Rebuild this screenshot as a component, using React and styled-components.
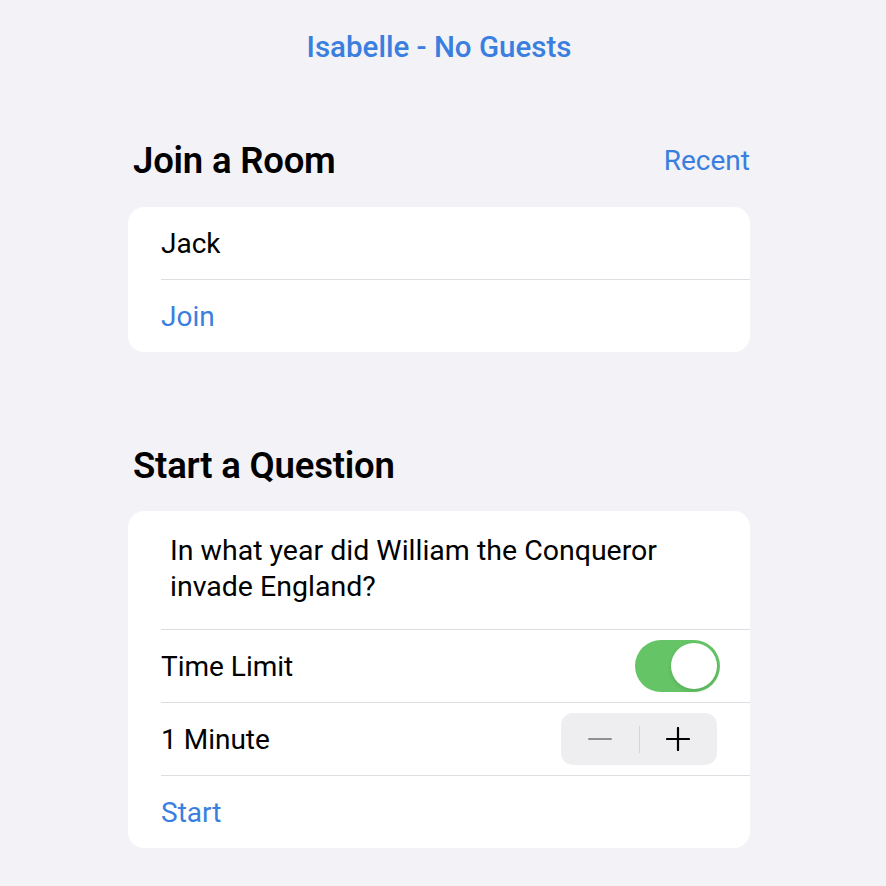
import React from 'react'
import styled, { createGlobalStyle } from 'styled-components'

const GlobalStyle = createGlobalStyle`
  html, body {
    margin: 0;
    padding: 0;
    background: #f2f2f7;
  }
  body {
    font-family: Roboto, "Noto Sans", "Liberation Sans", sans-serif;
    color: #000;
  }
`

const blue = '#3a7fe0'

const Page = styled.div`
  width: 622px;
  height: 886px;
  margin-left: 128px;
  display: flex;
  flex-direction: column;
`
const Title = styled.div`
  margin-top: 30px;
  height: 34px;
  line-height: 34px;
  text-align: center;
  font-size: 29.5px;
  font-weight: 500;
  color: ${blue};
`
const SectionHeader = styled.div`
  margin-top: ${props => props.top}px;
  height: 40px;
  padding: 0 0 0 5px;
  display: flex;
  align-items: center;
  justify-content: space-between;
`
const HeaderTitle = styled.h2`
  margin: 0;
  font-size: 36.5px;
  font-weight: 600;
  letter-spacing: -0.2px;
`
const HeaderLink = styled.span`
  font-size: 28px;
  color: ${blue};
`
const Card = styled.div`
  margin-top: ${props => props.top}px;
  background: #fff;
  border-radius: 16px;
  overflow: hidden;
`
const Row = styled.div`
  height: 72px;
  padding: 0 30px 0 33px;
  display: flex;
  align-items: center;
  justify-content: space-between;
  font-size: 28px;
  color: ${props => (props.action ? blue : '#000')};
`
const Separator = styled.div`
  height: 1px;
  margin-left: 33px;
  background: #dedee2;
`
const Question = styled.div`
  padding: 22px 40px 24px 42px;
  font-size: 28.5px;
  line-height: 36px;
`
const Toggle = styled.div`
  width: 85px;
  height: 52px;
  border-radius: 26px;
  background: #65c466;
  position: relative;
  flex-shrink: 0;
`
const Knob = styled.div`
  position: absolute;
  top: 3px;
  right: 3px;
  width: 46px;
  height: 46px;
  border-radius: 50%;
  background: #fff;
  box-shadow: 0 2px 4px rgba(0, 0, 0, 0.12);
`
const Stepper = styled.div`
  width: 156px;
  height: 52px;
  margin-right: 3px;
  border-radius: 12px;
  background: #eeeef0;
  display: flex;
  align-items: center;
`
const StepButton = styled.div`
  flex: 1;
  height: 100%;
  display: flex;
  align-items: center;
  justify-content: center;
`
const StepDivider = styled.div`
  width: 1px;
  height: 27px;
  background: #d4d4d8;
`

const Minus = () => (
  <svg width="24" height="24" viewBox="0 0 24 24">
    <path d="M1 12h22" stroke="#8e8e93" strokeWidth="2" strokeLinecap="round" />
  </svg>
)
const Plus = () => (
  <svg width="24" height="24" viewBox="0 0 24 24">
    <path d="M1 12h22M12 1v22" stroke="#000" strokeWidth="2.2" strokeLinecap="round" />
  </svg>
)

export default function App() {
  return (
    <>
      <GlobalStyle />
      <Page>
        <Title>Isabelle - No Guests</Title>

        <SectionHeader top={76}>
          <HeaderTitle>Join a Room</HeaderTitle>
          <HeaderLink>Recent</HeaderLink>
        </SectionHeader>
        <Card top={27}>
          <Row>Jack</Row>
          <Separator />
          <Row action>Join</Row>
        </Card>

        <SectionHeader top={93}>
          <HeaderTitle>Start a Question</HeaderTitle>
        </SectionHeader>
        <Card top={26}>
          <Question>
            In what year did William the Conqueror
            <br />
            invade England?
          </Question>
          <Separator />
          <Row>
            Time Limit
            <Toggle>
              <Knob />
            </Toggle>
          </Row>
          <Separator />
          <Row>
            1 Minute
            <Stepper>
              <StepButton>
                <Minus />
              </StepButton>
              <StepDivider />
              <StepButton>
                <Plus />
              </StepButton>
            </Stepper>
          </Row>
          <Separator />
          <Row action>Start</Row>
        </Card>
      </Page>
    </>
  )
}
